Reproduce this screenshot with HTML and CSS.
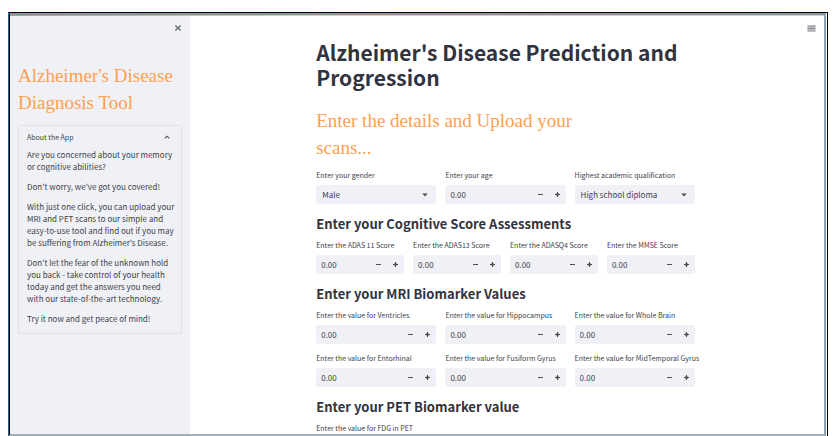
FILE: index.html
```html
<!DOCTYPE html>
<html lang="en">
<head>
<meta charset="utf-8">
<meta name="viewport" content="width=device-width, initial-scale=1">
<title>Alzheimer's Disease Prediction and Progression</title>
<link rel="stylesheet" href="styles.css">
</head>
<body>
<div class="frame">
  <div class="window">
    <div class="rainbow"></div>
    <div class="app">
      <aside class="sidebar">
        <div class="sidebar-top">
          <button class="icon-button" type="button" aria-label="Close sidebar">
            <svg width="8" height="8" viewBox="0 0 8 8"><path d="M1.4 1.6 6.6 6.4M6.6 1.6 1.4 6.4" fill="none" stroke="#666872" stroke-width="1.4"/></svg>
          </button>
        </div>
        <h2 class="script-title">Alzheimer's Disease Diagnosis Tool</h2>
        <section class="expander">
          <button class="expander-head" type="button" aria-expanded="true">
            <span>About the App</span>
            <svg width="6" height="4" viewBox="0 0 6 4"><path d="M.7 3.3 3 1.2 5.3 3.3" fill="none" stroke="#4a4c57" stroke-width="1.1"/></svg>
          </button>
          <div class="expander-body">
            <p>Are you concerned about your memory or cognitive abilities?</p>
            <p>Don't worry, we've got you covered!</p>
            <p>With just one click, you can upload your MRI and PET scans to our simple and easy-to-use tool and find out if you may be suffering from Alzheimer's Disease.</p>
            <p>Don't let the fear of the unknown hold you back - take control of your health today and get the answers you need with our state-of-the-art technology.</p>
            <p>Try it now and get peace of mind!</p>
          </div>
        </section>
      </aside>
      <main class="main">
        <button class="icon-button menu" type="button" aria-label="Menu">
          <svg width="9" height="7" viewBox="0 0 9 7"><path d="M.5.5H8.5V6H.5Z" fill="#c4c5ca"/><path d="M.5 1H8.5M.5 3.5H8.5M.5 6H8.5" fill="none" stroke="#85868e" stroke-width="1.2"/></svg>
        </button>
        <form class="content">
          <h1>Alzheimer's Disease Prediction and Progression</h1>
          <h2 class="script-title lead">Enter the details and Upload your scans...</h2>

          <div class="row thirds">
            <div class="field">
              <label for="gender">Enter your gender</label>
              <div class="control">
                <select id="gender"><option>Male</option><option>Female</option></select>
                <svg class="caret" width="6" height="4" viewBox="0 0 6 4"><path d="M.3.4H5.7L3 3.6Z" fill="#4a4c57"/></svg>
              </div>
            </div>
            <div class="field">
              <label for="age">Enter your age</label>
              <div class="control"><input id="age" type="text" inputmode="decimal" value="0.00"><button type="button" class="minus" aria-label="Decrease"></button><button type="button" class="plus" aria-label="Increase"></button></div>
            </div>
            <div class="field">
              <label for="edu">Highest academic qualification</label>
              <div class="control">
                <select id="edu"><option>High school diploma</option></select>
                <svg class="caret" width="6" height="4" viewBox="0 0 6 4"><path d="M.3.4H5.7L3 3.6Z" fill="#4a4c57"/></svg>
              </div>
            </div>
          </div>

          <h3>Enter your Cognitive Score Assessments</h3>
          <div class="row quarters">
            <div class="field">
              <label for="adas11">Enter the ADAS 11 Score</label>
              <div class="control"><input id="adas11" type="text" inputmode="decimal" value="0.00"><button type="button" class="minus" aria-label="Decrease"></button><button type="button" class="plus" aria-label="Increase"></button></div>
            </div>
            <div class="field">
              <label for="adas13">Enter the ADAS13 Score</label>
              <div class="control"><input id="adas13" type="text" inputmode="decimal" value="0.00"><button type="button" class="minus" aria-label="Decrease"></button><button type="button" class="plus" aria-label="Increase"></button></div>
            </div>
            <div class="field">
              <label for="adasq4">Enter the ADASQ4 Score</label>
              <div class="control"><input id="adasq4" type="text" inputmode="decimal" value="0.00"><button type="button" class="minus" aria-label="Decrease"></button><button type="button" class="plus" aria-label="Increase"></button></div>
            </div>
            <div class="field">
              <label for="mmse">Enter the MMSE Score</label>
              <div class="control"><input id="mmse" type="text" inputmode="decimal" value="0.00"><button type="button" class="minus" aria-label="Decrease"></button><button type="button" class="plus" aria-label="Increase"></button></div>
            </div>
          </div>

          <h3>Enter your MRI Biomarker Values</h3>
          <div class="row thirds">
            <div class="field">
              <label for="ventricles">Enter the value for Ventricles</label>
              <div class="control"><input id="ventricles" type="text" inputmode="decimal" value="0.00"><button type="button" class="minus" aria-label="Decrease"></button><button type="button" class="plus" aria-label="Increase"></button></div>
            </div>
            <div class="field">
              <label for="hippocampus">Enter the value for Hippocampus</label>
              <div class="control"><input id="hippocampus" type="text" inputmode="decimal" value="0.00"><button type="button" class="minus" aria-label="Decrease"></button><button type="button" class="plus" aria-label="Increase"></button></div>
            </div>
            <div class="field">
              <label for="brain">Enter the value for Whole Brain</label>
              <div class="control"><input id="brain" type="text" inputmode="decimal" value="0.00"><button type="button" class="minus" aria-label="Decrease"></button><button type="button" class="plus" aria-label="Increase"></button></div>
            </div>
            <div class="field">
              <label for="entorhinal">Enter the value for Entorhinal</label>
              <div class="control"><input id="entorhinal" type="text" inputmode="decimal" value="0.00"><button type="button" class="minus" aria-label="Decrease"></button><button type="button" class="plus" aria-label="Increase"></button></div>
            </div>
            <div class="field">
              <label for="fusiform">Enter the value for Fusiform Gyrus</label>
              <div class="control"><input id="fusiform" type="text" inputmode="decimal" value="0.00"><button type="button" class="minus" aria-label="Decrease"></button><button type="button" class="plus" aria-label="Increase"></button></div>
            </div>
            <div class="field">
              <label for="midtemporal">Enter the value for MidTemporal Gyrus</label>
              <div class="control"><input id="midtemporal" type="text" inputmode="decimal" value="0.00"><button type="button" class="minus" aria-label="Decrease"></button><button type="button" class="plus" aria-label="Increase"></button></div>
            </div>
          </div>

          <h3>Enter your PET Biomarker value</h3>
          <div class="field">
            <label for="fdg">Enter the value for FDG in PET</label>
            <div class="control"><input id="fdg" type="text" inputmode="decimal" value="0.00"><button type="button" class="minus" aria-label="Decrease"></button><button type="button" class="plus" aria-label="Increase"></button></div>
          </div>
        </form>
      </main>
    </div>
  </div>
</div>
</body>
</html>
```

FILE: styles.css
```css
* { box-sizing: border-box; }

body {
  margin: 0;
  height: 100vh;
  padding: 12px 6px 0 8px;
  overflow: hidden;
  background: #fff;
  color: #3c3e4a;
  font-family: "Noto Sans CJK SC", "Noto Sans", sans-serif;
  font-size: 7px;
}

h1, h2, h3, p { margin: 0; }

button, input, select {
  margin: 0;
  padding: 0;
  border: 0;
  background: none;
  color: inherit;
  font: inherit;
}

.frame {
  height: 100%;
  padding-right: 1px;
  border-left: 1px solid #2f5d88;
  border-top: 1px solid #000;
  border-right: 1px solid #000;
}

.window {
  display: flex;
  flex-direction: column;
  height: 100%;
  border-top: 2px solid #8296a5;
  border-right: 2px solid #8ba3b4;
  border-bottom: 2px solid #9fb0be;
  border-left: 1px solid #000;
}

.rainbow {
  flex: none;
  height: 1px;
  background: linear-gradient(90deg, #f08080, #ffc0a0 35%, #f8c880 65%, #d4dc8c);
}

.app {
  display: flex;
  flex: 1;
  min-height: 0;
}

.sidebar {
  flex: none;
  width: 180px;
  padding: 8px 8px 0;
  background: #f0f1f6;
}

.sidebar-top {
  display: flex;
  justify-content: flex-end;
  height: 38px;
}

.icon-button {
  display: block;
  height: 8px;
  line-height: 0;
}

.script-title {
  color: #ffa04f;
  font-family: "Liberation Serif", serif;
  font-size: 19px;
  font-weight: 400;
  line-height: 27px;
}

.expander {
  margin-top: 9px;
  padding: 5px 4px 8px 8px;
  border: 1px solid #e0e2e8;
  border-radius: 2px;
}

.expander-head {
  display: flex;
  align-items: center;
  justify-content: space-between;
  width: 100%;
  height: 12px;
  padding-right: 7px;
}

.expander-body {
  display: grid;
  gap: 8px;
  padding-top: 6px;
  font-size: 8px;
  line-height: 12px;
}

.main {
  position: relative;
  flex: 1;
  min-width: 0;
  padding: 24px 3px 0 0;
  overflow: hidden;
}

.menu {
  position: absolute;
  top: 8px;
  right: 8px;
}

.content {
  width: 60%;
  margin: 0 auto;
}

h1 {
  color: #31333f;
  font-size: 21px;
  font-weight: 700;
  line-height: 25px;
}

.lead {
  max-width: 300px;
  margin: 17px 0 8px;
}

h3 {
  margin: 10px 0 6px;
  color: #31333f;
  font-size: 13px;
  font-weight: 700;
  line-height: 19px;
}

.row {
  display: grid;
  gap: 8px 9px;
}

.thirds { grid-template-columns: repeat(3, minmax(0, 1fr)); }
.quarters { grid-template-columns: repeat(4, minmax(0, 1fr)); }

.field label {
  display: block;
  margin-bottom: 4px;
  line-height: 12px;
  white-space: nowrap;
}

.control {
  position: relative;
  display: flex;
  height: 19px;
  border-radius: 2px;
  background: #f0f1f6;
  font-size: 8px;
}

.control input {
  flex: 1;
  min-width: 0;
  padding-left: 5px;
}

.control select {
  width: 100%;
  padding-left: 6px;
  appearance: none;
}

.caret {
  position: absolute;
  top: 8px;
  right: 8px;
  pointer-events: none;
}

.control button {
  flex: none;
  width: 17px;
  background: linear-gradient(#4a4c57, #4a4c57) center / 5px 1px no-repeat;
}

.control .plus {
  background:
    linear-gradient(#4a4c57, #4a4c57) center / 5px 1px no-repeat,
    linear-gradient(#4a4c57, #4a4c57) center / 1px 5px no-repeat,
    linear-gradient(#a0a1a8, #a0a1a8) center / 3px 3px no-repeat;
}
```
